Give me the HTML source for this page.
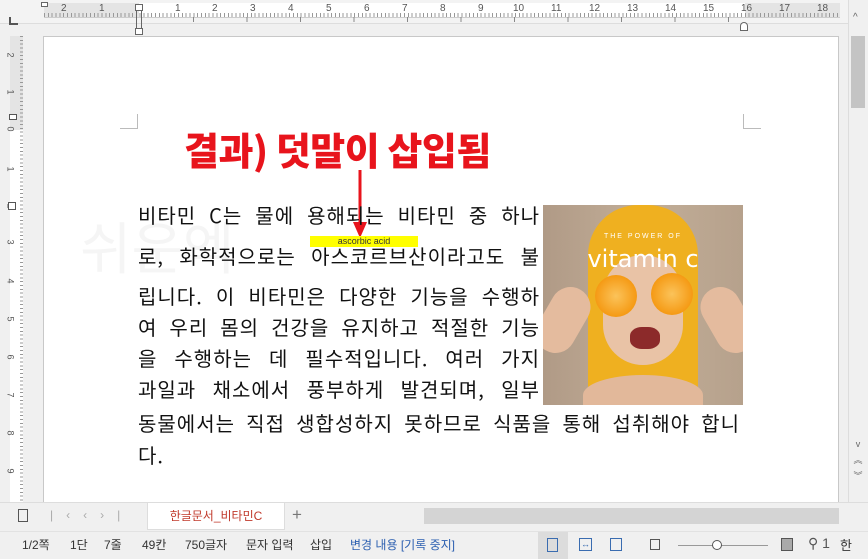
<!DOCTYPE html>
<html><head><meta charset="utf-8"><style>
*{margin:0;padding:0;box-sizing:border-box}
body{width:868px;height:559px;overflow:hidden;background:#f0f0f0;font-family:"Liberation Sans","Noto Sans CJK KR",sans-serif;position:relative}
.abs{position:absolute}
.ln{position:absolute;left:138px;font-size:20px;line-height:24px;color:#111;text-align:justify;text-align-last:justify;white-space:nowrap;font-family:"Noto Sans CJK KR",sans-serif;font-weight:400;letter-spacing:1px}
.st{position:absolute;top:536px;font-size:12px;color:#333;font-family:"Liberation Sans","Noto Sans CJK KR",sans-serif}
.rn{position:absolute;top:3px;font-size:10px;color:#555;font-family:"Liberation Sans",sans-serif}
.vn{position:absolute;left:8px;font-size:9px;color:#555;transform:rotate(90deg)}
</style></head><body>
<div class="abs" style="left:0;top:0;width:848px;height:24px;background:#f3f3f3;border-bottom:1px solid #ddd"></div>
<div class="abs" style="left:44px;top:3px;width:796px;height:14px;background:#fff"></div>
<div class="abs" style="left:44px;top:3px;width:95px;height:14px;background:#e4e4e4"></div>
<div class="abs" style="left:745px;top:3px;width:95px;height:14px;background:#e4e4e4"></div>
<div class="abs" style="left:44px;top:13px;width:796px;height:4px;background:repeating-linear-gradient(90deg,#999 0 1px,transparent 1px 3.83px)"></div>
<div class="abs" style="left:44px;top:17px;width:796px;height:1px;background:#ccc"></div>
<div class="abs" style="left:193px;top:17px;width:540px;height:5px;background:repeating-linear-gradient(90deg,#888 0 1px,transparent 1px 53.5px)"></div>
<span class="rn" style="left:61px">2</span><span class="rn" style="left:99px">1</span><span class="rn" style="left:175px">1</span><span class="rn" style="left:212px">2</span><span class="rn" style="left:250px">3</span><span class="rn" style="left:288px">4</span><span class="rn" style="left:326px">5</span><span class="rn" style="left:364px">6</span><span class="rn" style="left:402px">7</span><span class="rn" style="left:440px">8</span><span class="rn" style="left:478px">9</span><span class="rn" style="left:513px">10</span><span class="rn" style="left:551px">11</span><span class="rn" style="left:589px">12</span><span class="rn" style="left:627px">13</span><span class="rn" style="left:665px">14</span><span class="rn" style="left:703px">15</span><span class="rn" style="left:741px">16</span><span class="rn" style="left:779px">17</span><span class="rn" style="left:817px">18</span>
<div class="abs" style="left:9px;top:17px;width:9px;height:8px;border-left:2px solid #555;border-bottom:2px solid #555"></div>
<div class="abs" style="left:41px;top:2px;width:7px;height:5px;border:1px solid #666;background:#fff"></div>
<div class="abs" style="left:135px;top:4px;width:8px;height:7px;border:1px solid #666;background:#fff"></div>
<div class="abs" style="left:135px;top:28px;width:8px;height:7px;border:1px solid #666;background:#fff"></div>
<div class="abs" style="left:136px;top:11px;width:6px;height:17px;border-left:1px solid #666;border-right:1px solid #666"></div>
<div class="abs" style="left:740px;top:22px;width:8px;height:9px;border:1px solid #666;border-radius:4px 4px 0 0;background:#fff"></div>
<div class="abs" style="left:10px;top:36px;width:13px;height:466px;background:#fff"></div>
<div class="abs" style="left:10px;top:36px;width:13px;height:94px;background:#e4e4e4"></div>
<div class="abs" style="left:20px;top:36px;width:3px;height:466px;background:repeating-linear-gradient(180deg,#999 0 1px,transparent 1px 3.83px)"></div>
<span class="vn" style="top:50px">2</span><span class="vn" style="top:87px">1</span><span class="vn" style="top:124px">0</span><span class="vn" style="top:164px">1</span><span class="vn" style="top:201px">2</span><span class="vn" style="top:237px">3</span><span class="vn" style="top:276px">4</span><span class="vn" style="top:314px">5</span><span class="vn" style="top:352px">6</span><span class="vn" style="top:390px">7</span><span class="vn" style="top:428px">8</span><span class="vn" style="top:466px">9</span>
<div class="abs" style="left:9px;top:114px;width:8px;height:6px;border:1px solid #555;background:#fff"></div>
<div class="abs" style="left:8px;top:202px;width:8px;height:8px;border:1px solid #555;background:#fff"></div>
<div class="abs" style="left:43px;top:36px;width:796px;height:466px;background:#fff;border:1px solid #c8c8c8;border-bottom:none"></div>
<div class="abs" style="left:120px;top:114px;width:18px;height:15px;border-right:1px solid #bbb;border-bottom:1px solid #bbb"></div>
<div class="abs" style="left:743px;top:114px;width:18px;height:15px;border-left:1px solid #bbb;border-bottom:1px solid #bbb"></div>
<div class="abs" style="left:80px;top:205px;font-size:56px;color:#f5f5f5;font-family:'Noto Sans CJK KR',sans-serif">쉬운엑</div>
<div class="abs" style="left:184px;top:123px;font-size:38px;line-height:52px;font-weight:900;color:#e8141c;font-family:'Noto Sans CJK KR',sans-serif;letter-spacing:-0.5px">결과) 덧말이 삽입됨</div>
<svg class="abs" style="left:348px;top:170px" width="24" height="70"><line x1="12" y1="0" x2="12" y2="56" stroke="#e8141c" stroke-width="3"/><path d="M5 52 L12 68 L19 52Z" fill="#e8141c"/></svg>
<div class="abs" style="left:310px;top:236px;width:108px;height:11px;background:#ffff00;font-size:9px;line-height:11px;text-align:center;color:#333">ascorbic acid</div>
<div class="ln" style="top:203px;width:402px">비타민 C는 물에 용해되는 비타민 중 하나</div>
<div class="ln" style="top:244px;width:402px">로, 화학적으로는 아스코르브산이라고도 불</div>
<div class="ln" style="top:284px;width:402px">립니다. 이 비타민은 다양한 기능을 수행하</div>
<div class="ln" style="top:315px;width:402px">여 우리 몸의 건강을 유지하고 적절한 기능</div>
<div class="ln" style="top:346px;width:402px">을 수행하는 데 필수적입니다. 여러 가지</div>
<div class="ln" style="top:377px;width:402px">과일과 채소에서 풍부하게 발견되며, 일부</div>
<div class="ln" style="top:411px;width:602px">동물에서는 직접 생합성하지 못하므로 식품을 통해 섭취해야 합니</div>
<div class="ln" style="top:443px;text-align-last:left">다.</div>
<div class="abs" style="left:543px;top:205px;width:200px;height:200px;overflow:hidden;background:linear-gradient(90deg,#b09a86,#c2ae98 50%,#b6a18c)">
<div class="abs" style="left:45px;top:0;width:110px;height:190px;background:#efb020;border-radius:50px 50px 10px 10px"></div>
<div class="abs" style="left:60px;top:50px;width:80px;height:110px;background:#e9c3a6;border-radius:40px"></div>
<div class="abs" style="left:40px;top:170px;width:120px;height:40px;background:#e2b89a;border-radius:50% 50% 0 0"></div>
<div class="abs" style="left:0;top:80px;width:40px;height:70px;background:#e4bb9e;border-radius:20px;transform:rotate(30deg)"></div>
<div class="abs" style="left:165px;top:80px;width:40px;height:70px;background:#e4bb9e;border-radius:20px;transform:rotate(-30deg)"></div>
<div class="abs" style="left:52px;top:70px;width:42px;height:42px;border-radius:50%;background:radial-gradient(#fbc35a,#f59a14 70%,#f8c870)"></div>
<div class="abs" style="left:108px;top:68px;width:42px;height:42px;border-radius:50%;background:radial-gradient(#fbc35a,#f59a14 70%,#f8c870)"></div>
<div class="abs" style="left:87px;top:122px;width:30px;height:22px;border-radius:40%;background:#8c2a2a"></div>
<div class="abs" style="left:0;top:28px;width:200px;text-align:center;font-size:7px;letter-spacing:2px;color:#fff">THE POWER OF</div>
<div class="abs" style="left:0;top:40px;width:200px;text-align:center;font-size:24px;color:#fff;font-family:'DejaVu Sans',sans-serif">vitamin c</div>
</div>
<div class="abs" style="left:848px;top:0;width:20px;height:530px;background:#f0f0f0;border-left:1px solid #ddd"></div>
<div class="abs" style="left:851px;top:36px;width:14px;height:72px;background:#c4c4c4"></div>
<div class="abs" style="left:853px;top:12px;font-size:10px;color:#666">^</div>
<div class="abs" style="left:852px;top:436px;font-size:9px;color:#666;line-height:16px;text-align:center;width:12px">v<br>︽<br>︾</div>
<div class="abs" style="left:0;top:502px;width:868px;height:29px;background:#f0f0f0;border-top:1px solid #ddd"></div>
<div class="abs" style="left:18px;top:509px;width:10px;height:13px;border:1px solid #555"></div>
<div class="abs" style="left:50px;top:508px;font-size:12px;color:#aaa;letter-spacing:13px">|‹‹›|</div>
<div class="abs" style="left:147px;top:503px;width:138px;height:27px;background:#fff;border:1px solid #ddd;border-top:none;font-size:12px;line-height:27px;text-align:center;color:#c0392b">한글문서_비타민C</div>
<div class="abs" style="left:292px;top:505px;font-size:17px;color:#777">+</div>
<div class="abs" style="left:424px;top:508px;width:415px;height:16px;background:#d4d4d4"></div>
<div class="abs" style="left:0;top:531px;width:868px;height:28px;background:#f0f0f0;border-top:1px solid #e2e2e2"></div>
<span class="st" style="left:22px">1/2쪽</span><span class="st" style="left:70px">1단</span><span class="st" style="left:104px">7줄</span><span class="st" style="left:142px">49칸</span><span class="st" style="left:185px">750글자</span><span class="st" style="left:246px">문자 입력</span><span class="st" style="left:310px">삽입</span><span class="st" style="left:350px;color:#2b5fb0">변경 내용 [기록 중지]</span>
<div class="abs" style="left:538px;top:532px;width:30px;height:27px;background:#dcdcdc"></div>
<div class="abs" style="left:547px;top:538px;width:11px;height:14px;border:1px solid #3a6cb0"></div>
<div class="abs" style="left:579px;top:538px;width:13px;height:13px;border:1px solid #3a6cb0;font-size:9px;line-height:11px;text-align:center;color:#3a6cb0">↔</div>
<div class="abs" style="left:610px;top:538px;width:12px;height:13px;border:1px solid #3a6cb0"></div>
<div class="abs" style="left:650px;top:539px;width:10px;height:11px;border:1px solid #555"></div>
<div class="abs" style="left:678px;top:545px;width:90px;height:1px;background:#999"></div>
<div class="abs" style="left:712px;top:540px;width:10px;height:10px;border:1px solid #555;border-radius:50%;background:#fff"></div>
<div class="abs" style="left:781px;top:538px;width:12px;height:13px;border:1px solid #555;background:#aaa"></div>
<div class="abs" style="left:808px;top:535px;font-size:14px;color:#555">⚲ 1</div>
<div class="abs" style="left:840px;top:535px;font-size:13px;color:#333">한</div>
</body></html>
